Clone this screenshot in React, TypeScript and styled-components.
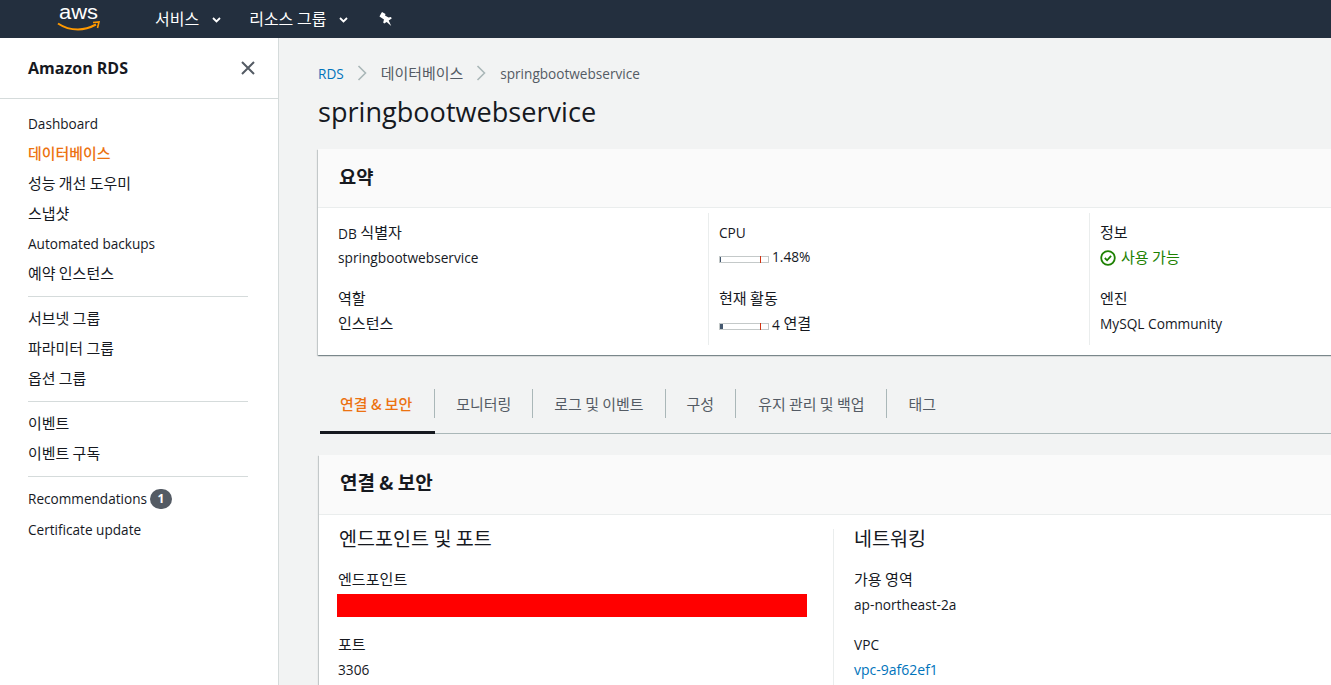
import React from "react";
import styled, { createGlobalStyle } from "styled-components";

const Global = createGlobalStyle`
  html, body { margin: 0; padding: 0; height: 685px; overflow: hidden; }
  body { font-family: "Open Sans", "Noto Sans CJK KR", sans-serif; font-size: 14px; color: #16191f; }
  * { box-sizing: border-box; }
`;
const Ko = styled.span`display: inline-block; font-family: "Noto Sans CJK KR", sans-serif; font-size: ${p => p.$scale || 1.1}em; transform: translateY(${p => p.$up ?? -1}px);`;
const Page = styled.div`width: 1331px; height: 685px; overflow: hidden; display: flex; flex-direction: column; background: #f2f3f3;`;
const TopBar = styled.header`height: 38px; flex: none; background: #232f3e; display: flex; align-items: center; color: #fff; padding-left: 57px;`;
const Logo = styled.svg`width: 44px; height: 38px; display: block; margin-right: 54px; overflow: visible;`;
const TopMenu = styled.span`display: flex; align-items: center; font-size: 16px; line-height: 20px; margin-right: ${p => p.$gap}px; gap: 13px; padding-bottom: 2px;`;
const Body = styled.div`flex: 1; display: flex; min-height: 0;`;
const Side = styled.nav`width: 279px; flex: none; background: #fff; border-right: 1px solid #d5dbdb; overflow: hidden;`;
const SideHead = styled.div`height: 61px; border-bottom: 1px solid #d5dbdb; display: flex; align-items: center; justify-content: space-between; padding: 0 22px 1px 28px;`;
const SideTitle = styled.div`font-size: 16px; font-weight: 700; line-height: 20px;`;
const NavList = styled.div`padding: 9px 30px 0 28px; display: flex; flex-direction: column;`;
const NavItem = styled.div`height: ${p => p.$h || 30}px; display: flex; align-items: center; font-size: 13.6px; gap: 3px; color: ${p => p.$active ? "#ec7211" : "#16191f"}; font-weight: ${p => p.$active ? 500 : 400};`;
const NavRule = styled.div`height: 1px; background: #d5dbdb; margin: 8px 0 6px;`;
const Badge = styled.span`width: 22px; height: 20px; border-radius: 10px; background: #545b64; color: #fff; font-size: 12px; font-weight: 700; display: flex; align-items: center; justify-content: center;`;
const Main = styled.main`flex: 1; min-width: 0; padding: 24px 0 0 39px; overflow: hidden;`;
const Crumbs = styled.div`display: flex; align-items: center; height: 22px; font-size: 13.6px; gap: 13px;`;
const CrumbLink = styled.span`color: ${p => p.$blue ? "#0073bb" : "#545b64"};`;
const Title = styled.h1`font-size: 27.1px; font-weight: 400; line-height: 36px; margin: 10px 0 19px;`;
const Card = styled.section`background: #fff; box-shadow: 0 1px 1px 0 rgba(0,28,36,.3), 1px 1px 1px 0 rgba(0,28,36,.15), -1px 1px 1px 0 rgba(0,28,36,.15); width: 1100px;`;
const CardHead = styled.div`height: ${p => p.$h}px; background: #fafafa; border-bottom: 1px solid #eaeded; display: flex; align-items: center; padding: 0 0 ${p => p.$pb ?? 3}px 21px; font-size: 17px; font-weight: 700;`;
const SummaryGrid = styled.div`display: grid; grid-template-columns: 390px 381px 1fr; padding: 5px 0 10px;`;
const SummaryCol = styled.div`padding-left: ${p => p.$first ? 20 : 10}px; border-left: ${p => p.$first ? "none" : "1px solid #eaeded"}; height: 132px; display: flex; flex-direction: column; gap: 16px;`;
const Field = styled.div`display: flex; flex-direction: column; gap: 4px; height: 50px; padding-top: 10px;`;
const Label = styled.div`font-size: 13.7px; line-height: 20px; color: #16191f;`;
const Value = styled.div`font-size: 13.7px; line-height: 20px; display: flex; align-items: center; color: ${p => p.$color || "#16191f"}; gap: ${p => p.$gap || 3}px;`;
const Meter = styled.span`position: relative; width: 50px; height: 7px; margin-top: 4px; border: 1px solid #c4c9c9; display: block; background: #fff;`;
const MeterFill = styled.span`position: absolute; left: 0; top: 0; bottom: 0; background: #44586f;`;
const MeterMark = styled.span`position: absolute; left: 40px; top: -1px; bottom: -1px; width: 1px; background: #d13212;`;
const Tabs = styled.div`margin-top: 29px; height: 50px; width: 1100px; margin-left: 2px; border-bottom: 1px solid #aab7b8; display: flex; align-items: flex-start;`;
const Tab = styled.div`height: 50px; display: flex; flex-direction: column;`;
const TabLabel = styled.div`height: 30px; margin-top: 5px; padding: 0 ${p => p.$pr}px 0 ${p => p.$pl}px; border-right: ${p => p.$last ? "none" : "1px solid #aab7b8"}; display: flex; align-items: center; font-size: 13.6px; color: ${p => p.$active ? "#ec7211" : "#545b64"}; font-weight: ${p => p.$active ? 500 : 400};`;
const TabBar = styled.div`height: 3px; margin-top: 13px; background: ${p => p.$active ? "#16191f" : "transparent"};`;
const Conn = styled(Card)`margin-top: 21px; margin-left: 1px;`;
const ConnGrid = styled.div`display: grid; grid-template-columns: 514px 1fr; padding-top: 14px; height: 300px;`;
const ConnCol = styled.div`padding-left: ${p => p.$first ? 19 : 20}px; border-left: ${p => p.$first ? "none" : "1px solid #eaeded"};`;
const ColTitle = styled.div`font-size: 17.8px; line-height: 20px; margin-bottom: 20px; padding-left: ${p => p.$first ? 1 : 0}px;`;
const Redact = styled.div`width: 470px; height: 23px; background: #ff0000; margin-left: -1px; margin-top: -1px;`;
const ConnField = styled.div`display: flex; flex-direction: column; gap: ${p => p.$gap ?? 4}px; margin-bottom: ${p => p.$mb ?? 18}px;`;
const BlueLink = styled.div`font-size: 14px; line-height: 20px; color: #0073bb;`;

const Chevron = () => (
  <svg width="9" height="6" viewBox="0 0 9 6" style={{ marginTop: 4 }}><path d="M1 1l3.500 3.500L8 1" fill="none" stroke="#fff" strokeWidth="1.800" /></svg>
);
const Sep = () => (
  <svg width="11" height="16" viewBox="0 0 11 16"><path d="M1.500 1l7 7-7 7" fill="none" stroke="#aab7b8" strokeWidth="1.600" /></svg>
);
const tabs = [
  { t: "연결 & 보안", pl: 20, pr: 22 },
  { t: "모니터링", pl: 21, pr: 21 },
  { t: "로그 및 이벤트", pl: 21, pr: 21 },
  { t: "구성", pl: 21, pr: 21 },
  { t: "유지 관리 및 백업", pl: 22, pr: 22 },
  { t: "태그", pl: 21, pr: 21 },
];

export default function App() {
  return (
    <Page>
      <Global />
      <TopBar>
        <Logo viewBox="0 0 44 38">
          <text x="2" y="18.500" fill="#fff" fontSize="20.500" textLength="39" lengthAdjust="spacingAndGlyphs" fontFamily="Liberation Sans, sans-serif">aws</text>
          <path d="M1 23.500c6 4 13 6 20 6 6 0 12-1.800 18-5" fill="none" stroke="#f90" strokeWidth="2" />
          <path d="M36 22.500l6-.5-1.500 6" fill="none" stroke="#f90" strokeWidth="1.600" />
        </Logo>
        <TopMenu $gap={28}><Ko $scale={1} $up={0}>서비스</Ko> <Chevron /></TopMenu>
        <TopMenu $gap={30}><Ko $scale={1} $up={0}>리소스 그룹</Ko> <Chevron /></TopMenu>
        <svg width="15" height="16" viewBox="0 0 15 16" style={{ marginBottom: 1 }}><path d="M4 1l3.500 2-.5 1.500 3.500 2 2.500-.5.700 1.500-3 2 2.500 5.500-4.500-4-2.500 1.500-1-1L6 8.500 1.500 5.500 2.500 3.500z" fill="#fff" /></svg>
      </TopBar>
      <Body>
        <Side>
          <SideHead>
            <SideTitle>Amazon RDS</SideTitle>
            <svg width="16" height="16" viewBox="0 0 16 16"><path d="M2 2l12 12M14 2L2 14" stroke="#545b64" strokeWidth="2" fill="none" /></svg>
          </SideHead>
          <NavList>
            <NavItem>Dashboard</NavItem>
            <NavItem $active><Ko>데이터베이스</Ko></NavItem>
            <NavItem><Ko>성능 개선 도우미</Ko></NavItem>
            <NavItem><Ko>스냅샷</Ko></NavItem>
            <NavItem>Automated backups</NavItem>
            <NavItem><Ko>예약 인스턴스</Ko></NavItem>
            <NavRule />
            <NavItem><Ko>서브넷 그룹</Ko></NavItem>
            <NavItem><Ko>파라미터 그룹</Ko></NavItem>
            <NavItem><Ko>옵션 그룹</Ko></NavItem>
            <NavRule />
            <NavItem><Ko>이벤트</Ko></NavItem>
            <NavItem><Ko>이벤트 구독</Ko></NavItem>
            <NavRule />
            <NavItem $h={31}>Recommendations <Badge>1</Badge></NavItem>
            <NavItem>Certificate update</NavItem>
          </NavList>
        </Side>
        <Main>
          <Crumbs>
            <CrumbLink $blue>RDS</CrumbLink><Sep />
            <CrumbLink><Ko>데이터베이스</Ko></CrumbLink><Sep />
            <CrumbLink>springbootwebservice</CrumbLink>
          </Crumbs>
          <Title>springbootwebservice</Title>
          <Card>
            <CardHead $h={59}><Ko>요약</Ko></CardHead>
            <SummaryGrid>
              <SummaryCol $first>
                <Field><Label>DB <Ko>식별자</Ko></Label><Value>springbootwebservice</Value></Field>
                <Field><Label><Ko>역할</Ko></Label><Value><Ko>인스턴스</Ko></Value></Field>
              </SummaryCol>
              <SummaryCol>
                <Field><Label>CPU</Label><Value><Meter><MeterFill style={{ width: "1.5%" }} /><MeterMark /></Meter>1.48%</Value></Field>
                <Field><Label><Ko>현재 활동</Ko></Label><Value><Meter><MeterFill style={{ width: "6%" }} /><MeterMark /></Meter><span>4 <Ko>연결</Ko></span></Value></Field>
              </SummaryCol>
              <SummaryCol>
                <Field><Label><Ko>정보</Ko></Label>
                  <Value $color="#1d8102" $gap={5}>
                    <svg width="16" height="16" viewBox="0 0 16 16"><circle cx="8" cy="8" r="6.800" fill="none" stroke="#1d8102" strokeWidth="1.800" /><path d="M4.800 8l2.300 2.300 4-4.400" fill="none" stroke="#1d8102" strokeWidth="1.800" /></svg>
                    <Ko>사용 가능</Ko>
                  </Value>
                </Field>
                <Field><Label><Ko>엔진</Ko></Label><Value>MySQL Community</Value></Field>
              </SummaryCol>
            </SummaryGrid>
          </Card>
          <Tabs>
            {tabs.map((x, i) => (
              <Tab key={x.t}>
                <TabLabel $pl={x.pl} $pr={x.pr} $active={i === 0} $last={i === tabs.length - 1}><Ko $up={0}>{x.t}</Ko></TabLabel>
                <TabBar $active={i === 0} />
              </Tab>
            ))}
          </Tabs>
          <Conn>
            <CardHead $h={60} $pb={5}><Ko $scale={1.12}>연결 &amp; 보안</Ko></CardHead>
            <ConnGrid>
              <ConnCol $first>
                <ColTitle $first><Ko>엔드포인트 및 포트</Ko></ColTitle>
                <ConnField><Label><Ko>엔드포인트</Ko></Label><Redact /></ConnField>
                <ConnField><Label><Ko>포트</Ko></Label><Value>3306</Value></ConnField>
              </ConnCol>
              <ConnCol>
                <ColTitle><Ko>네트워킹</Ko></ColTitle>
                <ConnField $mb={20}><Label><Ko>가용 영역</Ko></Label><Value>ap-northeast-2a</Value></ConnField>
                <ConnField $gap={5}><Label>VPC</Label><BlueLink>vpc-9af62ef1</BlueLink></ConnField>
              </ConnCol>
            </ConnGrid>
          </Conn>
        </Main>
      </Body>
    </Page>
  );
}
